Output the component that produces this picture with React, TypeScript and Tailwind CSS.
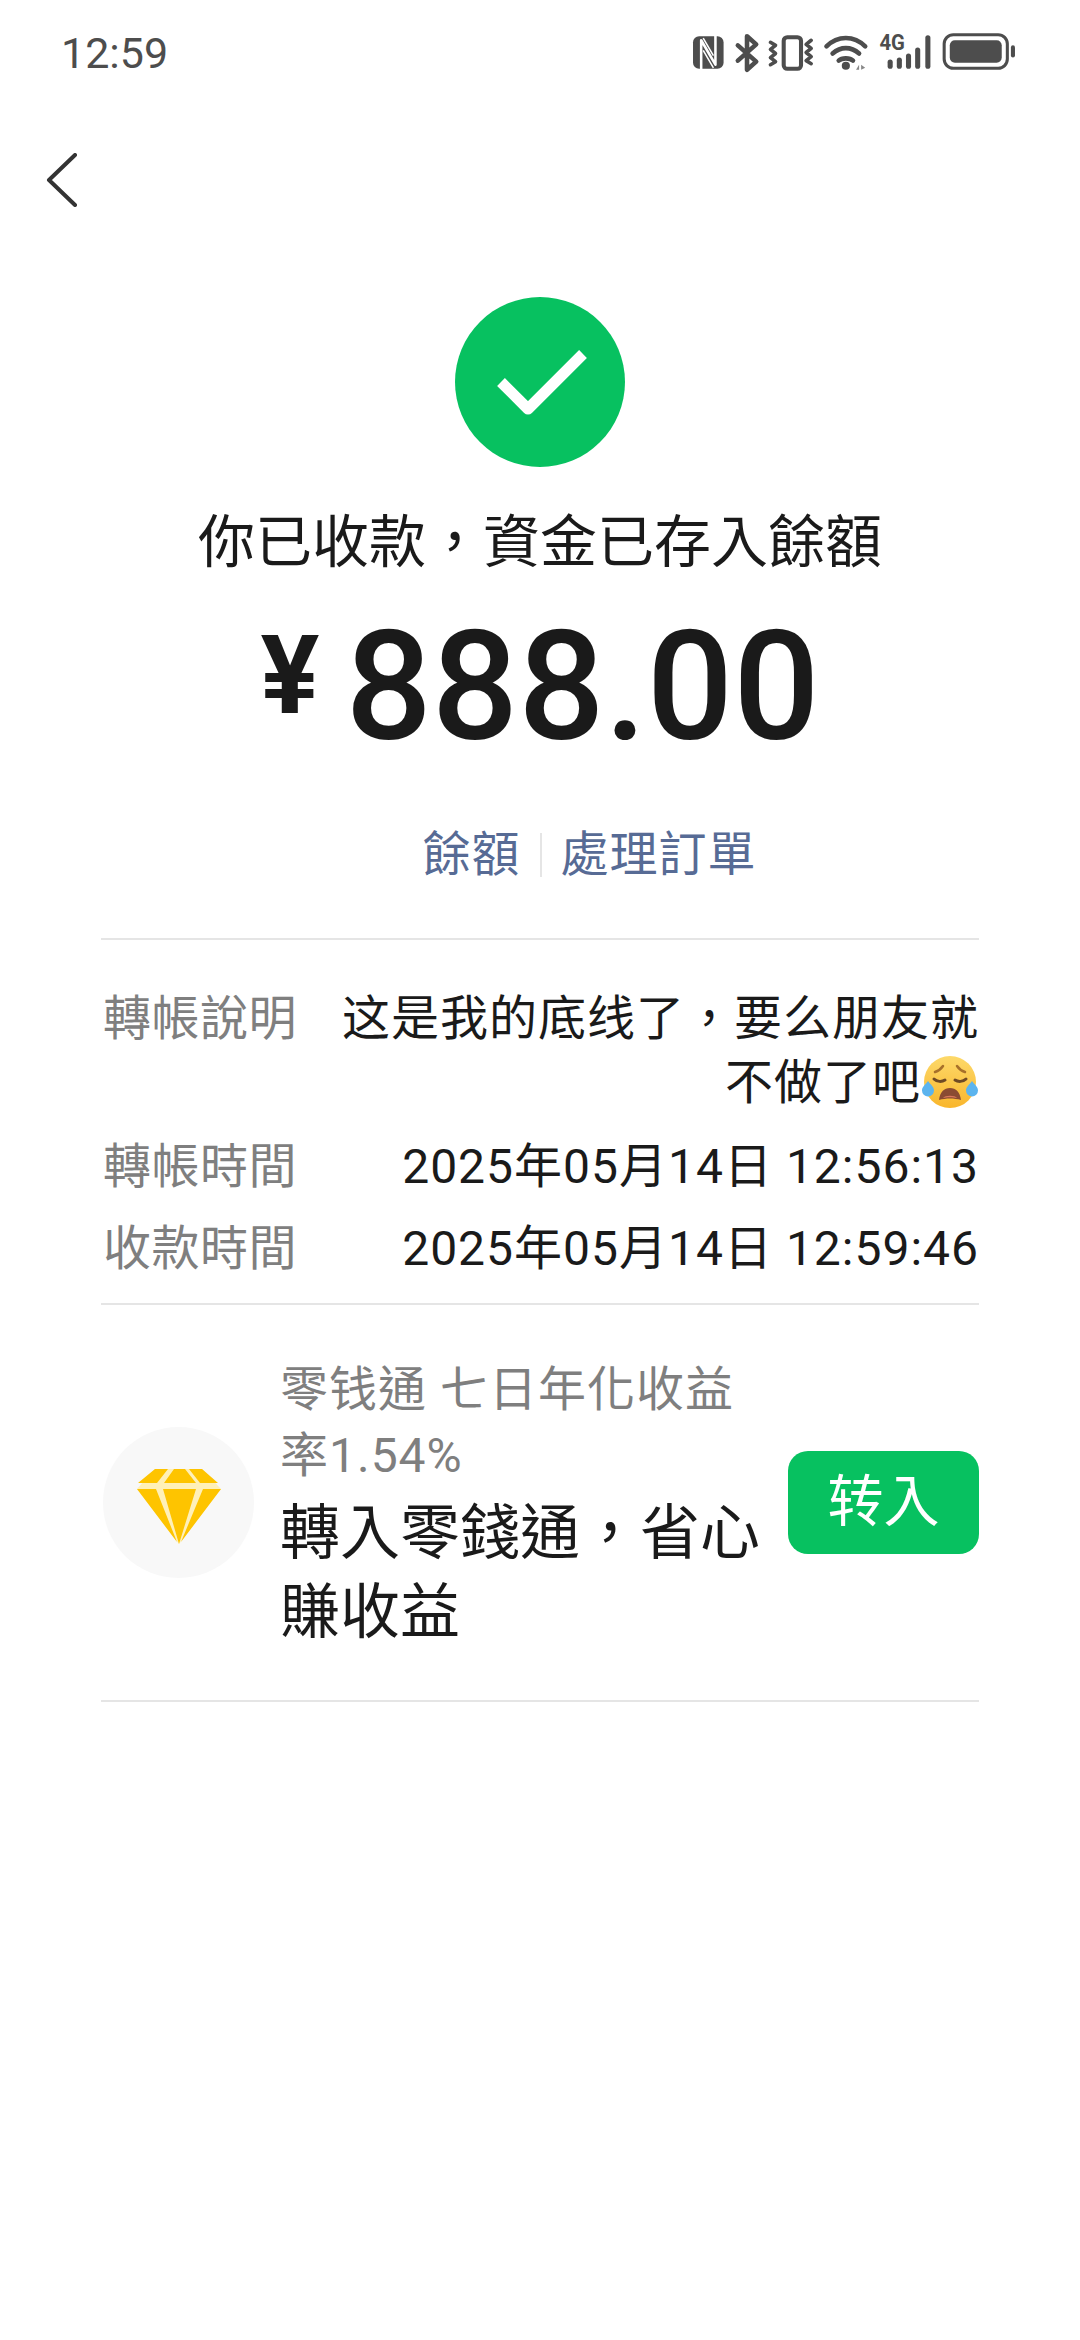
const FONT = '[font-family:Roboto,"Noto_Sans_CJK_TC",sans-serif]'

function StatusIcons() {
  return (
    <svg width="324" height="52" viewBox="0 -6 318 51" fill="#4d4d4d">
      {/* nfc */}
      <rect x="1" y="3" width="30" height="32" rx="6" />
      <path d="M9 36V7l14 24V2" fill="none" stroke="#fff" strokeWidth="2.5" strokeLinejoin="round" />
      <path d="M11 17l10 17M11 5l10 17" fill="none" stroke="#fff" strokeWidth="1.5" />
      {/* bluetooth */}
      <path d="M45 12l18 16-9 8V3l9 8-18 16" fill="none" stroke="#4d4d4d" strokeWidth="4.5" strokeLinecap="round" strokeLinejoin="round" />
      {/* vibrate */}
      <rect x="90" y="4" width="17" height="31" rx="3.5" fill="none" stroke="#4d4d4d" strokeWidth="4" />
      <path d="M77 9l5 3-5 4 5 4-5 4 5 4-5 3M117 7l-5 4 5 4-5 4 5 4-5 4 5 3" fill="none" stroke="#4d4d4d" strokeWidth="3.5" strokeLinecap="round" strokeLinejoin="round" />
      {/* wifi */}
      <path d="M132 13c11-11 27-11 38 0M138 20c8-7 18-7 26 0M144 27c3-3 11-3 14 0" fill="none" stroke="#4d4d4d" strokeWidth="4.5" strokeLinecap="round" />
      <circle cx="151" cy="32" r="4" />
      <path d="M161 36l3-5v5zM166 31l4 3-4 2z" fill="#888" />
      {/* 4G signal */}
      <text x="184" y="17" fontSize="22" fontWeight="700" fontFamily="Roboto, sans-serif" textLength="25" lengthAdjust="spacingAndGlyphs">4G</text>
      <rect x="192" y="26" width="5" height="9" rx="2.5" />
      <rect x="201" y="24" width="5" height="11" rx="2.5" />
      <rect x="210" y="20" width="5" height="15" rx="2.5" />
      <rect x="219" y="14" width="5" height="21" rx="2.5" />
      <rect x="229" y="2" width="5" height="33" rx="2.5" />
      {/* battery */}
      <rect x="247.5" y="1.5" width="62" height="33" rx="9" fill="none" stroke="#4d4d4d" strokeWidth="3" />
      <rect x="253" y="7" width="51" height="22" rx="5" />
      <rect x="313" y="12" width="4" height="12" rx="2" />
    </svg>
  )
}

function WeepyFace() {
  return (
    <svg width="58" height="56" viewBox="0 0 58 56" className="shrink-0">
      <defs>
        <linearGradient id="face" x1="0" y1="0" x2="0" y2="1">
          <stop offset="0" stopColor="#fdd96a" />
          <stop offset="1" stopColor="#f9b62c" />
        </linearGradient>
      </defs>
      <circle cx="29" cy="27" r="26" fill="url(#face)" />
      <path d="M14 17c3-1 6-3 8-6M44 17c-3-1-6-3-8-6" stroke="#a7702a" strokeWidth="2.5" strokeLinecap="round" fill="none" />
      <path d="M13 24c3 3 8 3 11 1M34 25c3 2 8 2 11-1" stroke="#6f4a25" strokeWidth="3" strokeLinecap="round" fill="none" />
      <path d="M18 45c1-8 5-12 11-12s10 4 11 12c-7-2-15-2-22 0z" fill="#8a4b32" />
      <path d="M22 43c2-3 12-3 14 0c-4-1-10-1-14 0z" fill="#d9795c" />
      <path d="M7 26c-3 4-6 6-6 9.500a6 6 0 0 0 12 0c0-3.500-3-5.500-6-9.500zM51 26c-3 4-6 6-6 9.500a6 6 0 0 0 12 0c0-3.500-3-5.500-6-9.500z" fill="#5cb4ee" />
    </svg>
  )
}

function DiamondIcon() {
  return (
    <svg width="84" height="76" viewBox="0 0 84 76" className="mt-[8px]">
      <path d="M18 1h47l19 20-42 55L0 21z" fill="#fff0b8" />
      <g fill="#fec400">
        <path d="M18 1h13L20 15H1zM37 1h11l11 14H27zM52 1h13l16 14H63z" />
        <path d="M0 21h19l21 53zM26 21h33L42 76zM66 21h18L44 74z" />
      </g>
    </svg>
  )
}

function InfoRow({ label, children }: { label: string; children: React.ReactNode }) {
  return (
    <div className="flex justify-between gap-[44px]">
      <span className="shrink-0 pl-[2px] text-[48px] leading-[64px] tracking-[0.5px] text-[#7f7f7f]">{label}</span>
      <div className="text-right text-[48px] leading-[64px] tracking-[1px] text-[#1a1a1a]">{children}</div>
    </div>
  )
}

export default function App() {
  return (
    <div className={`${FONT} flex h-[2340px] w-[1080px] flex-col bg-white`}>
      {/* status bar */}
      <div className="flex h-[106px] items-center justify-between pl-[61px] pr-[64px]">
        <span className="text-[43px] text-[#4d4d4d]">12:59</span>
        <StatusIcons />
      </div>

      <div className="pl-[46px] pt-[47px]">
        <svg width="32" height="54" viewBox="0 0 32 54" fill="none" stroke="#333" strokeWidth="4" strokeLinecap="round" strokeLinejoin="round">
          <path d="M29 2L3 27l26 25" />
        </svg>
      </div>

      {/* result */}
      <div className="mt-[90px] flex flex-col items-center">
        <div className="flex h-[170px] w-[170px] items-center justify-center rounded-full bg-[#07c160]">
          <svg width="90" height="68" viewBox="0 0 90 68" fill="none" stroke="#fff" strokeWidth="11" strokeLinejoin="round" className="ml-[3px]">
            <path d="M4 34l27 27L86 6" />
          </svg>
        </div>
        <h1 className="mt-[36px] text-[57px] leading-[80px] font-normal text-[#1a1a1a]">你已收款&#xFF0C;資金已存入餘額</h1>
        <div className="mt-[24px] flex h-[160px] items-center text-[#1a1a1a]">
          <span className="mb-[22px] mr-[26px] text-[110px] leading-none font-bold">¥</span>
          <span className="text-[152px] leading-none font-medium">888.00</span>
        </div>
        <div className="mt-[56px] flex items-center pl-[99px] text-[48px] leading-[64px] tracking-[1px] text-[#576b95]">
          <span>餘額</span>
          <span className="mx-[19px] h-[44px] w-[2px] bg-[#e5e5e5]" />
          <span>處理訂單</span>
        </div>
      </div>

      {/* details */}
      <div className="mx-[101px] mt-[51px] border-t-2 border-[#e5e5e5] pb-[22px] pt-[47px]">
        <InfoRow label="轉帳說明">
          这是我的底线了&#xFF0C;要么朋友就
          <div className="flex items-center justify-end">
            不做了吧
            <WeepyFace />
          </div>
        </InfoRow>
        <div className="mt-[20px]">
          <InfoRow label="轉帳時間">2025年05月14日 12:56:13</InfoRow>
        </div>
        <div className="mt-[18px]">
          <InfoRow label="收款時間">2025年05月14日 12:59:46</InfoRow>
        </div>
      </div>

      {/* promo */}
      <div className="mx-[101px] flex items-center border-y-2 border-[#e5e5e5] pb-[48px] pt-[52px]">
        <div className="mb-[5px] ml-[2px] flex h-[151px] w-[151px] shrink-0 items-center justify-center rounded-full bg-[#f8f8f8]">
          <DiamondIcon />
        </div>
        <div className="ml-[26px] w-[490px]">
          <p className="text-[48px] leading-[66px] tracking-[1px] text-[#7f7f7f]">零钱通 七日年化收益率1.54%</p>
          <p className="mt-[5px] text-[60px] leading-[79px] font-normal text-[#1a1a1a]">轉入零錢通&#xFF0C;省心賺收益</p>
        </div>
        <button className="mb-[5px] ml-auto h-[103px] w-[191px] rounded-[20px] bg-[#07c160] text-[56px] text-white">转入</button>
      </div>
    </div>
  )
}
